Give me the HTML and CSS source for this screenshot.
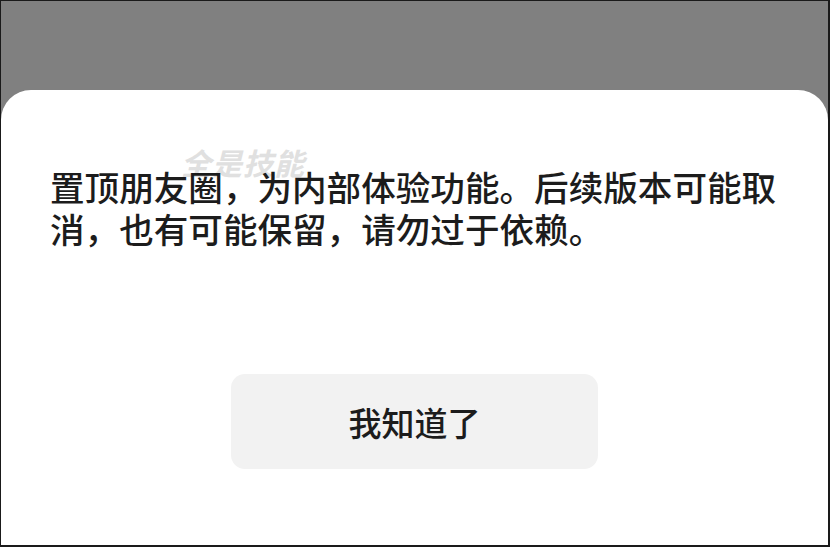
FILE: index.html
```html
<!DOCTYPE html>
<html lang="zh">
<head>
<meta charset="utf-8">
<link rel="stylesheet" href="styles.css">
</head>
<body>
<div class="frame">
  <div class="sheet">
    <div class="watermark">全是技能</div>
    <p class="message">置顶朋友圈，为内部体验功能。后续版本可能取消，也有可能保留，请勿过于依赖。</p>
    <div class="actions">
      <button class="ok">我知道了</button>
    </div>
  </div>
</div>
</body>
</html>
```
FILE: styles.css
```css
html, body {
  margin: 0;
  padding: 0;
}
body {
  width: 830px;
  height: 547px;
  overflow: hidden;
  font-family: "Noto Sans CJK SC", "Noto Sans", sans-serif;
}
.frame {
  box-sizing: border-box;
  width: 830px;
  height: 547px;
  background: #808080;
  border-style: solid;
  border-color: #1a1a1a;
  border-width: 1px 2px 2px 1px;
  display: flex;
  flex-direction: column;
}
.sheet {
  position: relative;
  margin-top: 89px;
  flex: 1;
  background: #ffffff;
  border-radius: 30px 30px 0 0;
  display: flex;
  flex-direction: column;
}
.watermark {
  position: absolute;
  left: 180px;
  top: 50px;
  font-size: 30px;
  font-weight: 700;
  font-style: italic;
  color: #e0e0e0;
  letter-spacing: 1px;
}
.message {
  position: relative;
  margin: 0;
  padding: 75px 48px 0 49px;
  font-size: 34.6px;
  font-weight: 500;
  line-height: 42px;
  color: #1c1c1c;
}
.actions {
  display: flex;
  justify-content: center;
  padding-top: 125px;
}
.ok {
  width: 367px;
  height: 95px;
  border: none;
  border-radius: 14px;
  background: #f2f2f2;
  font-family: "Noto Sans CJK SC", sans-serif;
  font-size: 33px;
  font-weight: 500;
  color: #1c1c1c;
  padding: 0;
}
```
